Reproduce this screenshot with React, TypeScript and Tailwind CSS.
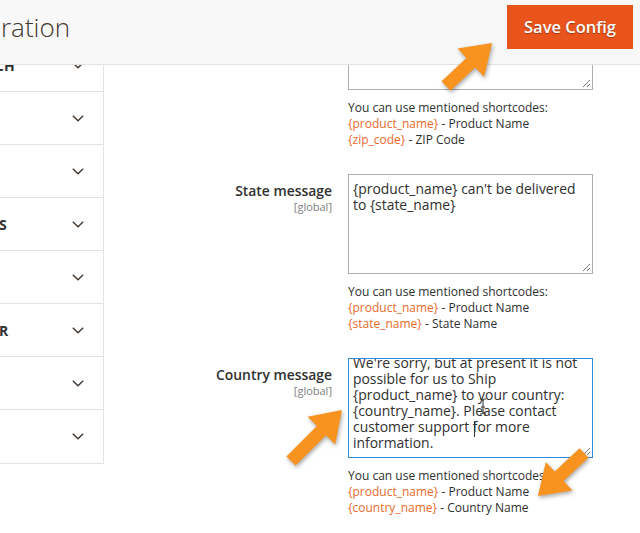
import React from "react";

type Row = { label: string; shift: number };

const sideRows: Row[] = [
  { label: "CH", shift: -5 },
  { label: "", shift: 0 },
  { label: "", shift: 0 },
  { label: "S", shift: -1 },
  { label: "", shift: 0 },
  { label: "R", shift: -1 },
  { label: "", shift: 0 },
  { label: "", shift: 0 },
];

function Chevron() {
  return (
    <svg width="12" height="7" viewBox="0 0 12 7" className="shrink-0">
      <path d="M0.8 0.8 L6 5.8 L11.2 0.8" fill="none" stroke="#41362f" strokeWidth="1.4" />
    </svg>
  );
}

function Grip() {
  return (
    <svg width="9" height="9" viewBox="0 0 9 9" className="absolute right-[1px] bottom-[1px]">
      <path d="M1 8 L8 1 M5 8 L8 5" stroke="#7a7a7a" strokeWidth="1" />
    </svg>
  );
}

function Note({ code, name }: { code: string; name: string }) {
  return (
    <div className="mt-[10px] text-[12px] leading-[16px] text-[#303030]">
      <div>You can use mentioned shortcodes:</div>
      <div>
        <span className="text-[#eb6a2b]">{"{product_name}"}</span> - Product Name
      </div>
      <div>
        <span className="text-[#eb6a2b]">{code}</span> - {name}
      </div>
    </div>
  );
}

function Field({ label, lines, focused, scroll }: { label: string; lines: string[]; focused?: boolean; scroll?: boolean }) {
  return (
    <div className="flex mt-[26px]">
      <div className="w-[228px] pt-[8px] text-right">
        <div className="text-[13.9px] leading-[18px] font-semibold text-[#303030]">{label}</div>
        <div className="text-[11px] leading-[14px] text-[#808080]">[global]</div>
      </div>
      <div className="ml-[16px] w-[245px]">
        <div
          className={`relative h-[100px] overflow-hidden bg-white border ${focused ? "border-[#2f8ae0]" : "border-[#adadad]"} px-[4px] ${scroll ? "pt-0" : "pt-[6px]"}`}
        >
          <div className={`whitespace-pre text-[13.9px] leading-[16px] text-[#303030] ${scroll ? "-mt-[4px]" : ""}`}>
            {lines.join("\n")}
          </div>
          {scroll && (
            <>
              <div className="absolute left-[125px] top-[62px] w-[1px] h-[16px] bg-[#303030]" />
              <svg width="8" height="17" viewBox="0 0 8 17" className="absolute left-[130px] top-[39px]">
                <path d="M1 1 H3 Q4 1 4 3 V14 Q4 16 6 16 H7 M7 1 H5 Q4 1 4 3 M4 14 Q4 16 2 16 H1 M2 9 H6" fill="none" stroke="#303030" strokeWidth="1" />
              </svg>
            </>
          )}
          <Grip />
        </div>
      </div>
    </div>
  );
}

function Arrow({ x, y, angle, length }: { x: number; y: number; angle: number; length: number }) {
  const L = length;
  const pts = `0,-6.5 ${L - 29},-6.5 ${L - 29},-19.5 ${L},0 ${L - 29},19.5 ${L - 29},6.5 0,6.5`;
  return <polygon points={pts} fill="#f7931e" transform={`translate(${x} ${y}) rotate(${angle})`} />;
}

export default function App() {
  return (
    <div
      className="relative w-[640px] h-[533px] overflow-hidden bg-white"
      style={{ fontFamily: '"Open Sans", "Liberation Sans", sans-serif' }}
    >
      <header className="relative z-10 h-[65px] bg-[#f8f8f8] border-b border-[#e3e3e3] flex items-start justify-between">
        <h1 className="mt-[9px] ml-[1px] text-[26px] leading-[36px] font-light text-[#41362f]">ration</h1>
        <button className="mt-[5px] mr-[7px] w-[126px] h-[44px] bg-[#e8541c] text-white text-[16.5px] font-semibold [text-shadow:0_1px_1px_rgba(0,0,0,0.35)]">
          Save Config
        </button>
      </header>

      <div className="flex -mt-[26px]">
        <aside className="w-[104px] border-r border-b border-[#e3e3e3] self-start">
          {sideRows.map((r, i) => (
            <div
              key={i}
              className={`h-[53px] flex items-center justify-between pr-[19px] overflow-hidden ${i < sideRows.length - 1 ? "border-b border-[#e3e3e3]" : ""}`}
            >
              <span
                className="text-[14px] font-bold text-[#303030] whitespace-nowrap"
                style={{ marginLeft: r.shift }}
              >
                {r.label}
              </span>
              <Chevron />
            </div>
          ))}
        </aside>

        <main className="flex-1">
          <div className="flex">
            <div className="w-[228px]" />
            <div className="ml-[16px] w-[245px]">
              <div className="relative h-[51px] border border-[#adadad] bg-white">
                <Grip />
              </div>
              <Note code="{zip_code}" name="ZIP Code" />
            </div>
          </div>

          <Field label="State message" lines={["{product_name} can't be delivered", "to {state_name}"]} />
          <div className="flex">
            <div className="w-[228px]" />
            <div className="ml-[16px] w-[245px]">
              <Note code="{state_name}" name="State Name" />
            </div>
          </div>

          <Field
            label="Country message"
            focused
            scroll
            lines={[
              "We're sorry, but at present it is not",
              "possible for us to Ship",
              "{product_name} to your country:",
              "{country_name}. Please contact",
              "customer support for more",
              "information.",
            ]}
          />
          <div className="flex">
            <div className="w-[228px]" />
            <div className="ml-[16px] w-[245px]">
              <Note code="{country_name}" name="Country Name" />
            </div>
          </div>
        </main>
      </div>

      <svg
        width="640"
        height="533"
        className="absolute inset-0 z-20 pointer-events-none [filter:drop-shadow(1px_2px_2px_rgba(0,0,0,0.35))]"
      >
        <Arrow x={446} y={86} angle={-43} length={63} />
        <Arrow x={291} y={461} angle={-45} length={72} />
        <Arrow x={584} y={453} angle={137} length={63} />
      </svg>
    </div>
  );
}
